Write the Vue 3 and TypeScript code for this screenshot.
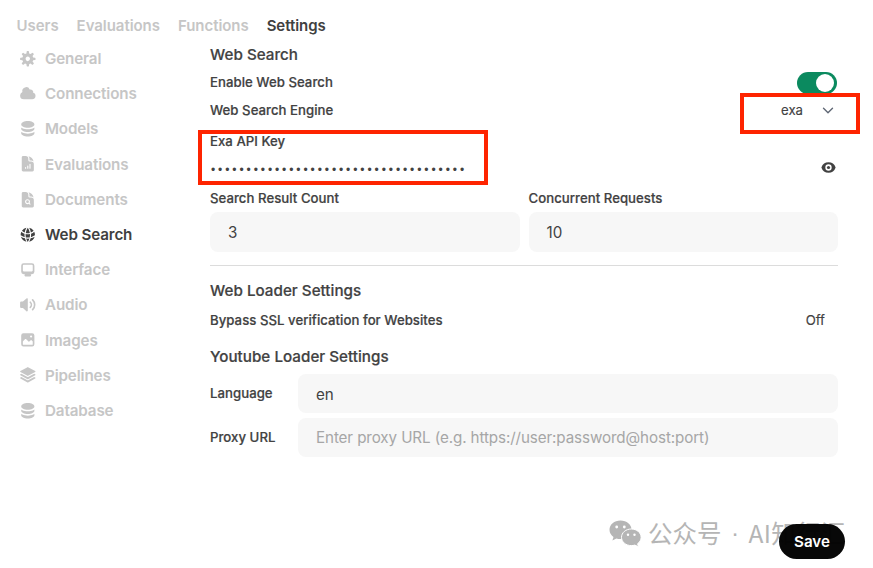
<script setup lang="ts">
import { ref } from 'vue'

interface NavItem {
  label: string
  box: number
  paths: string[]
}

const tabs: string[] = ['Users', 'Evaluations', 'Functions', 'Settings']
const activeTab = ref('Settings')
const activeItem = ref('Web Search')

const stack: string[] = [
  'M8 7c3.314 0 6-1.343 6-3s-2.686-3-6-3-6 1.343-6 3 2.686 3 6 3Z',
  'M8 8.5c1.84 0 3.579-.37 4.914-1.037A6.33 6.33 0 0 0 14 6.78V8c0 1.657-2.686 3-6 3S2 9.657 2 8V6.78c.346.273.72.5 1.087.683C4.42 8.131 6.16 8.5 8 8.5Z',
  'M8 12.5c1.84 0 3.579-.37 4.914-1.037.366-.183.74-.41 1.086-.684V12c0 1.657-2.686 3-6 3s-6-1.343-6-3v-1.22c.346.273.72.5 1.087.683C4.42 12.131 6.16 12.5 8 12.5Z',
]
const fileBody =
  'M5.625 1.5c-1.036 0-1.875.84-1.875 1.875v17.25c0 1.035.84 1.875 1.875 1.875h12.75c1.035 0 1.875-.84 1.875-1.875V12.75A3.75 3.75 0 0 0 16.5 9h-1.875a1.875 1.875 0 0 1-1.875-1.875V5.25A3.75 3.75 0 0 0 9 1.5H5.625Z'
const fileFold =
  'M14.25 5.25a5.23 5.23 0 0 0-1.279-3.434 9.768 9.768 0 0 1 6.963 6.963A5.23 5.23 0 0 0 16.5 7.5h-1.875a.375.375 0 0 1-.375-.375V5.25Z'

const items: NavItem[] = [
  {
    label: 'General',
    box: 16,
    paths: [
      'M6.955 1.45A.5.5 0 0 1 7.452 1h1.096a.5.5 0 0 1 .497.45l.17 1.699c.484.12.94.312 1.356.562l1.321-1.081a.5.5 0 0 1 .67.033l.774.775a.5.5 0 0 1 .034.67l-1.08 1.32c.25.417.44.873.561 1.357l1.699.17a.5.5 0 0 1 .45.497v1.096a.5.5 0 0 1-.45.497l-1.699.17c-.12.484-.312.94-.562 1.356l1.082 1.322a.5.5 0 0 1-.034.67l-.774.774a.5.5 0 0 1-.67.033l-1.322-1.08c-.416.25-.872.44-1.356.561l-.17 1.699a.5.5 0 0 1-.497.45H7.452a.5.5 0 0 1-.497-.45l-.17-1.699a4.973 4.973 0 0 1-1.356-.562L4.108 13.37a.5.5 0 0 1-.67-.033l-.774-.775a.5.5 0 0 1-.034-.67l1.08-1.32a4.971 4.971 0 0 1-.561-1.357l-1.699-.17A.5.5 0 0 1 1 8.548V7.452a.5.5 0 0 1 .45-.497l1.699-.17c.12-.484.312-.94.562-1.356L2.629 4.107a.5.5 0 0 1 .034-.67l.774-.774a.5.5 0 0 1 .67-.033L5.43 3.71a4.97 4.97 0 0 1 1.356-.561l.17-1.699ZM6 8c0 .538.212 1.026.558 1.385l.057.057a2 2 0 0 0 2.828-2.828l-.058-.056A2 2 0 0 0 6 8Z',
    ],
  },
  {
    label: 'Connections',
    box: 16,
    paths: [
      'M1 9.5A3.5 3.5 0 0 0 4.5 13H12a3 3 0 0 0 .917-5.857 2.503 2.503 0 0 0-3.198-3.019 3.5 3.5 0 0 0-6.628 2.171A3.5 3.5 0 0 0 1 9.5Z',
    ],
  },
  { label: 'Models', box: 16, paths: stack },
  {
    label: 'Evaluations',
    box: 24,
    paths: [
      fileBody +
        'M9.75 17.25a.75.75 0 0 0-1.5 0V18a.75.75 0 0 0 1.5 0v-.75Zm2.25-3a.75.75 0 0 1 .75.75v3a.75.75 0 0 1-1.5 0v-3a.75.75 0 0 1 .75-.75Zm3.75-1.5a.75.75 0 0 0-1.5 0V18a.75.75 0 0 0 1.5 0v-5.25Z',
      fileFold,
    ],
  },
  {
    label: 'Documents',
    box: 24,
    paths: [
      fileBody +
        'M11.625 18c.66 0 1.277-.19 1.797-.518l1.048 1.048a.75.75 0 0 0 1.06-1.06l-1.047-1.048A3.375 3.375 0 1 0 11.625 18Z',
      'M11.625 16.5a1.875 1.875 0 1 0 0-3.75 1.875 1.875 0 0 0 0 3.75Z',
      fileFold,
    ],
  },
  {
    label: 'Web Search',
    box: 24,
    paths: [
      'M21.721 12.752a9.711 9.711 0 0 0-.945-5.003 12.754 12.754 0 0 1-4.339 2.708 18.991 18.991 0 0 1-.214 4.772 17.165 17.165 0 0 0 5.498-2.477ZM14.634 15.55a17.324 17.324 0 0 0 .332-4.647c-.952.227-1.945.347-2.966.347-1.021 0-2.014-.12-2.966-.347a17.515 17.515 0 0 0 .332 4.647 17.385 17.385 0 0 0 5.268 0ZM9.772 17.119a18.963 18.963 0 0 0 4.456 0A17.182 17.182 0 0 1 12 21.724a17.18 17.18 0 0 1-2.228-4.605ZM7.777 15.23a18.87 18.87 0 0 1-.214-4.774 12.753 12.753 0 0 1-4.34-2.708 9.711 9.711 0 0 0-.944 5.004 17.165 17.165 0 0 0 5.498 2.477ZM21.356 14.752a9.765 9.765 0 0 1-7.478 6.817 18.64 18.64 0 0 0 1.988-4.718 18.627 18.627 0 0 0 5.49-2.098ZM2.644 14.752c1.682.971 3.53 1.688 5.49 2.099a18.64 18.64 0 0 0 1.988 4.718 9.765 9.765 0 0 1-7.478-6.816ZM13.878 2.43a9.755 9.755 0 0 1 6.116 3.986 11.267 11.267 0 0 1-3.746 2.504 18.63 18.63 0 0 0-2.37-6.49ZM12 2.276a17.152 17.152 0 0 1 2.805 7.121c-.897.23-1.837.353-2.805.353-.968 0-1.908-.122-2.805-.353A17.151 17.151 0 0 1 12 2.276ZM10.122 2.43a18.629 18.629 0 0 0-2.37 6.49 11.266 11.266 0 0 1-3.746-2.504 9.754 9.754 0 0 1 6.116-3.985Z',
    ],
  },
  {
    label: 'Interface',
    box: 16,
    paths: [
      'M2 4.25A2.25 2.25 0 0 1 4.25 2h7.5A2.25 2.25 0 0 1 14 4.25v5.5A2.25 2.25 0 0 1 11.75 12h-1.312c.1.128.21.248.328.36a.75.75 0 0 1 .234.545v.345a.75.75 0 0 1-.75.75h-4.5a.75.75 0 0 1-.75-.75v-.345a.75.75 0 0 1 .234-.545c.118-.111.228-.232.328-.36H4.25A2.25 2.25 0 0 1 2 9.75v-5.5Zm2.25-.75a.75.75 0 0 0-.75.75v4.5c0 .414.336.75.75.75h7.5a.75.75 0 0 0 .75-.75v-4.5a.75.75 0 0 0-.75-.75h-7.5Z',
    ],
  },
  {
    label: 'Audio',
    box: 16,
    paths: [
      'M7.557 2.066A.75.75 0 0 1 8 2.75v10.5a.75.75 0 0 1-1.248.56L3.59 11H2a1 1 0 0 1-1-1V6a1 1 0 0 1 1-1h1.59l3.162-2.81a.75.75 0 0 1 .805-.124ZM12.95 3.05a.75.75 0 1 0-1.06 1.06 5.5 5.5 0 0 1 0 7.78.75.75 0 1 0 1.06 1.06 7 7 0 0 0 0-9.9Z',
      'M10.828 5.172a.75.75 0 1 0-1.06 1.06 2.5 2.5 0 0 1 0 3.536.75.75 0 1 0 1.06 1.06 4 4 0 0 0 0-5.656Z',
    ],
  },
  {
    label: 'Images',
    box: 16,
    paths: [
      'M2 4a2 2 0 0 1 2-2h8a2 2 0 0 1 2 2v8a2 2 0 0 1-2 2H4a2 2 0 0 1-2-2V4Zm10.5 5.707a.5.5 0 0 0-.146-.353l-1-1a.5.5 0 0 0-.708 0L9.354 9.646a.5.5 0 0 1-.708 0L6.354 7.354a.5.5 0 0 0-.708 0l-2 2a.5.5 0 0 0-.146.353V12a.5.5 0 0 0 .5.5h8a.5.5 0 0 0 .5-.5V9.707ZM12 5a1 1 0 1 1-2 0 1 1 0 0 1 2 0Z',
    ],
  },
  {
    label: 'Pipelines',
    box: 24,
    paths: [
      'M11.644 1.59a.75.75 0 0 1 .712 0l9.75 5.25a.75.75 0 0 1 0 1.32l-9.75 5.25a.75.75 0 0 1-.712 0l-9.75-5.25a.75.75 0 0 1 0-1.32l9.75-5.25Z',
      'm3.265 10.602 7.668 4.129a2.25 2.25 0 0 0 2.134 0l7.668-4.13 1.37.739a.75.75 0 0 1 0 1.32l-9.75 5.25a.75.75 0 0 1-.71 0l-9.75-5.25a.75.75 0 0 1 0-1.32l1.37-.738Z',
      'm10.933 19.231-7.668-4.13-1.37.739a.75.75 0 0 0 0 1.32l9.75 5.25c.221.12.489.12.71 0l9.75-5.25a.75.75 0 0 0 0-1.32l-1.37-.738-7.668 4.13a2.25 2.25 0 0 1-2.134-.001Z',
    ],
  },
  { label: 'Database', box: 16, paths: stack },
]

const maskedKey = '•'.repeat(36)
const enabled = ref(true)
</script>

<template>
  <div class="page">
    <nav class="tabs">
      <a v-for="t in tabs" :key="t" class="tab" :class="{ active: t === activeTab }" @click="activeTab = t">{{ t }}</a>
    </nav>
    <div class="body">
      <aside class="side">
        <a v-for="i in items" :key="i.label" class="item" :class="{ active: i.label === activeItem }" @click="activeItem = i.label">
          <svg class="icon" :viewBox="`0 0 ${i.box} ${i.box}`" fill="currentColor" fill-rule="evenodd">
            <path v-for="(p, n) in i.paths" :key="n" :d="p" />
          </svg>
          <span>{{ i.label }}</span>
        </a>
      </aside>

      <main class="main">
        <h2 class="title">Web Search</h2>
        <div class="row">
          <span class="label">Enable Web Search</span>
          <button class="switch" :class="{ on: enabled }" @click="enabled = !enabled"><i class="knob"></i></button>
        </div>
        <div class="row">
          <span class="label">Web Search Engine</span>
          <span class="select">
            exa
            <svg class="chevron" viewBox="0 0 12 8" fill="none" stroke="#5f6775" stroke-width="1.4" stroke-linecap="round" stroke-linejoin="round"><path d="M1.500 2.200 6 6.700l4.500-4.500" /></svg>
          </span>
        </div>
        <div class="label key-label">Exa API Key</div>
        <div class="key">
          <span class="mask">{{ maskedKey }}</span>
          <svg class="eye" viewBox="0 0 16 16" fill="currentColor" fill-rule="evenodd">
            <path d="M8 9.500a1.500 1.500 0 1 0 0-3 1.500 1.500 0 0 0 0 3Z" />
            <path d="M1.380 8.280a.87.87 0 0 1 0-.566 7.003 7.003 0 0 1 13.238.006.87.87 0 0 1 0 .566A7.003 7.003 0 0 1 1.379 8.280ZM11 8a3 3 0 1 1-6 0 3 3 0 0 1 6 0Z" />
          </svg>
        </div>
        <div class="pair">
          <div>
            <div class="label count-label">Search Result Count</div>
            <div class="field tall">3</div>
          </div>
          <div>
            <div class="label count-label">Concurrent Requests</div>
            <div class="field tall">10</div>
          </div>
        </div>
        <hr class="rule" />
        <h2 class="title loader">Web Loader Settings</h2>
        <div class="row bypass">
          <span class="label">Bypass SSL verification for Websites</span>
          <span class="off">Off</span>
        </div>
        <h2 class="title youtube">Youtube Loader Settings</h2>
        <div class="line">
          <span class="label">Language</span>
          <div class="field">en</div>
        </div>
        <div class="line">
          <span class="label">Proxy URL</span>
          <div class="field hint">Enter proxy URL (e.g. https://user:password@host:port)</div>
        </div>
      </main>
    </div>

    <div class="mark">
      <svg class="wechat" viewBox="0 0 33 27">
        <path fill="#b5b5b5" d="M11.500.5C5.200.5.500 4.600.500 9.800c0 3 1.500 5.500 4 7.200L3.400 20.500l4-2.100c1.300.4 2.700.6 4.100.6 6.300 0 11-4.100 11-9.300S17.800.500 11.500.500Z" />
        <path fill="#b5b5b5" stroke="#fff" stroke-width="1" d="M22.300 9c-5.500 0-9.800 3.700-9.800 8.300s4.300 8.300 9.800 8.300c1.200 0 2.400-.2 3.500-.5l3.700 1.700-.9-3.100c2.200-1.500 3.500-3.800 3.500-6.400C32.100 12.700 27.800 9 22.300 9Z" />
        <g fill="#fff">
          <circle cx="7.700" cy="7" r="1.400" /><circle cx="15.300" cy="7" r="1.400" />
          <circle cx="19" cy="14.800" r="1.200" /><circle cx="25.500" cy="14.800" r="1.200" />
        </g>
      </svg>
      <span class="mark-a">公众号</span><span class="mark-dot">·</span><span class="mark-b">AI知行汇</span>
    </div>
    <button class="save">Save</button>
    <div class="box box-key"></div>
    <div class="box box-engine"></div>
  </div>
</template>

<style>
body {
  background: #fff;
}
</style>

<style scoped>
.page {
  position: relative;
  width: 873px;
  height: 568px;
  overflow: hidden;
  box-sizing: border-box;
  padding-top: 14px;
  background: #fff;
  color: #424242;
  font-family: Inter, 'Noto Sans CJK SC', sans-serif;
  font-weight: 500;
}
.tabs {
  display: flex;
  gap: 18px;
  height: 24px;
  padding-left: 16.500px;
  font-size: 15px;
  font-weight: 600;
  letter-spacing: -0.050px;
  line-height: 24px;
}
.tab,
.item {
  color: #c6c6c6;
}
.tab.active,
.item.active {
  color: #404040;
}
.body {
  display: flex;
}
.side {
  display: flex;
  flex-direction: column;
  width: 191px;
  padding: 3px 0 0 19px;
  box-sizing: border-box;
  flex: none;
  margin-right: 19px;
}
.item {
  display: flex;
  align-items: center;
  gap: 8.400px;
  height: 35.200px;
  font-size: 15.200px;
  font-weight: 600;
  letter-spacing: -0.130px;
}
.icon {
  width: 17.600px;
  height: 17.600px;
  flex: none;
}
.main {
  width: 628px;
  padding-top: 4px;
}
.title {
  margin: 0;
  font-size: 15.200px;
  font-weight: 500;
  letter-spacing: 0.020px;
  -webkit-text-stroke: 0.200px currentColor;
  line-height: 26px;
  height: 26px;
}
.label {
  font-size: 13.200px;
  font-weight: 500;
  letter-spacing: 0.030px;
  -webkit-text-stroke: 0.200px currentColor;
  white-space: nowrap;
}
.row {
  display: flex;
  align-items: center;
  justify-content: space-between;
  height: 28px;
}
.switch {
  display: flex;
  justify-content: flex-start;
  align-items: center;
  width: 40px;
  height: 22px;
  margin: 2px 1px 0 0;
  padding: 0 3px;
  border: 0;
  border-radius: 11px;
  background: #d4d4d4;
  box-sizing: border-box;
}
.switch.on {
  justify-content: flex-end;
  background: #0b8a5f;
}
.knob {
  width: 18px;
  height: 18px;
  border-radius: 50%;
  background: #fff;
}
.select {
  display: flex;
  align-items: center;
  gap: 19px;
  padding-right: 4px;
  font-size: 13.200px;
  font-weight: 400;
  -webkit-text-stroke: 0.150px currentColor;
}
.chevron {
  width: 12px;
  height: 8px;
}
.key-label {
  height: 20px;
  margin-top: 7px;
  line-height: 20px;
}
.key {
  display: flex;
  align-items: center;
  justify-content: space-between;
  height: 32px;
  padding-right: 1px;
}
.mask {
  padding: 5px 0 0 1px;
  font-family: 'Liberation Sans', sans-serif;
  font-size: 12px;
  letter-spacing: 2.910px;
}
.eye {
  width: 17px;
  height: 17px;
}
.pair {
  display: grid;
  grid-template-columns: 1fr 1fr;
  gap: 9px;
  margin-top: 5px;
}
.count-label {
  height: 24px;
  line-height: 20px;
}
.field {
  display: flex;
  align-items: center;
  flex: 1;
  height: 39px;
  padding: 1px 18px 0;
  box-sizing: border-box;
  border-radius: 8px;
  background: #f7f7f7;
  font-size: 15.200px;
  font-weight: 400;
}
.field.tall {
  height: 40px;
}
.field.hint {
  padding-top: 0;
  color: #a6a6a6;
  letter-spacing: -0.105px;
}
.rule {
  height: 1px;
  margin: 13px 0 0;
  border: 0;
  background: #dcdcdc;
}
.loader {
  margin-top: 12px;
}
.bypass {
  margin-top: 2px;
}
.off {
  padding-right: 13px;
  font-size: 13.200px;
  font-weight: 400;
  -webkit-text-stroke: 0.150px currentColor;
}
.youtube {
  margin-top: 10px;
  margin-bottom: 4px;
}
.line {
  display: flex;
  align-items: center;
  margin-bottom: 5px;
}
.line .label {
  width: 88px;
  padding-bottom: 2px;
}
.mark {
  position: absolute;
  left: 609px;
  top: 516px;
  display: flex;
  align-items: center;
  height: 36px;
  color: #b5b5b5;
  font-family: 'Noto Sans CJK SC', sans-serif;
  font-size: 24.500px;
  font-weight: 400;
  line-height: 30px;
  white-space: nowrap;
}
.wechat {
  width: 33px;
  height: 27px;
  margin: -1px 6px 0 0;
}
.mark-a,
.mark-dot,
.mark-b {
  margin-top: -3px;
}
.mark-dot {
  width: 27px;
  font-family: 'Liberation Sans', sans-serif;
  text-align: center;
}
.mark-b {
  letter-spacing: 0.300px;
}
.save {
  position: absolute;
  left: 779px;
  top: 524px;
  width: 66px;
  height: 35px;
  padding: 0;
  border: 0;
  border-radius: 18px;
  background: rgba(0, 0, 0, 0.970);
  color: #fff;
  font-family: Inter, sans-serif;
  font-size: 15.200px;
  font-weight: 600;
}
.box {
  position: absolute;
  box-sizing: border-box;
  border: 4px solid #fe2400;
}
.box-key {
  left: 198px;
  top: 130px;
  width: 290px;
  height: 55px;
}
.box-engine {
  left: 740px;
  top: 93px;
  width: 120px;
  height: 41px;
}
</style>
